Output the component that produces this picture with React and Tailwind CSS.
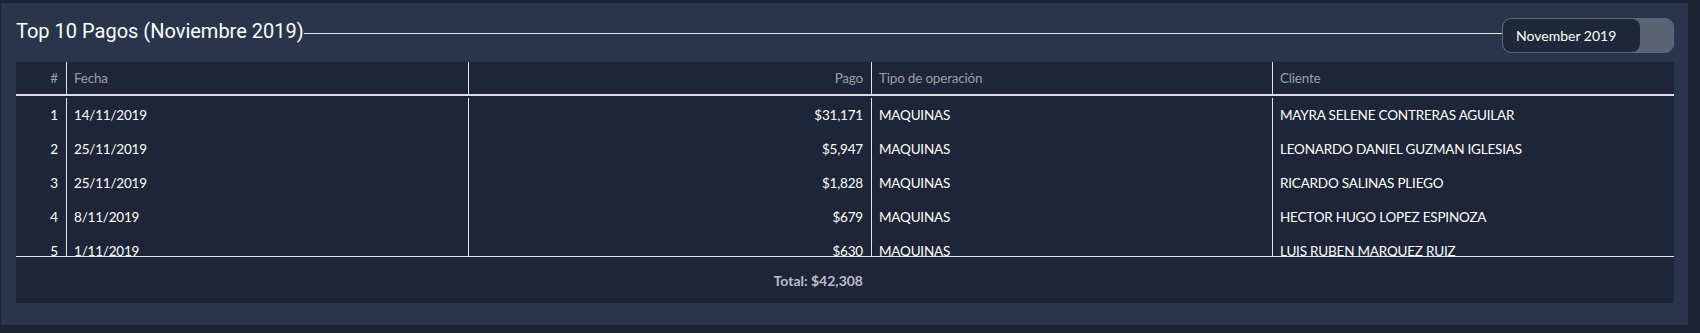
import React from "react";

const rows = [
  ["1", "14/11/2019", "$31,171", "MAQUINAS", "MAYRA SELENE CONTRERAS AGUILAR"],
  ["2", "25/11/2019", "$5,947", "MAQUINAS", "LEONARDO DANIEL GUZMAN IGLESIAS"],
  ["3", "25/11/2019", "$1,828", "MAQUINAS", "RICARDO SALINAS PLIEGO"],
  ["4", "8/11/2019", "$679", "MAQUINAS", "HECTOR HUGO LOPEZ ESPINOZA"],
  ["5", "1/11/2019", "$630", "MAQUINAS", "LUIS RUBEN MARQUEZ RUIZ"],
];

const grid = "grid grid-cols-[50px_402px_403px_401px_402px]";

export default function App() {
  return (
    <div className="w-[1700px] h-[333px] bg-[#1d2335] pt-[3px] pl-[1px] overflow-hidden">
      <div className="w-[1687px] h-[322px] bg-[#28354b] pl-[15px] pr-[14px] pt-[15px]">
        {/* Title row */}
        <div className="flex items-start h-[35px]">
          <div className="mt-[1px] text-[20px] leading-[24px] text-white whitespace-nowrap font-['Roboto',sans-serif]">
            Top 10 Pagos (Noviembre 2019)
          </div>
          <div className="flex-1 h-px bg-[#e6e8ec] mt-[15px]" />
          <div className="w-[172px] h-[35px] rounded-[9px] border border-[#5b6578] bg-[#5a6475] overflow-hidden flex">
            <div className="w-[137px] h-full bg-[#1f283b] rounded-[8px] flex items-center pl-[13px] text-[14px] text-white font-['Lato',sans-serif]">
              November 2019
            </div>
          </div>
        </div>
        {/* Table */}
        <div className="mt-[9px] bg-[#1e2538] font-['Lato',sans-serif] text-[13.5px] tracking-[-0.2px]">
          <div className={`${grid} h-[34px] border-b-2 border-[#dcdde0] text-[#9a9ea8]`}>
            <div className="flex items-center justify-end pr-[8px]">#</div>
            <div className="flex items-center pl-[7px] border-l border-[#e2e3e6]">Fecha</div>
            <div className="flex items-center justify-end pr-[8px] border-l border-[#e2e3e6]">Pago</div>
            <div className="flex items-center pl-[7px] border-l border-[#e2e3e6]">Tipo de operación</div>
            <div className="flex items-center pl-[7px] border-l border-[#e2e3e6]">Cliente</div>
          </div>
          <div className="h-[161px] pt-[2px] overflow-hidden border-b border-[#e2e3e6]">
            {rows.map((r) => (
              <div key={r[0]} className={`${grid} h-[34px] text-white`}>
                <div className="flex items-center justify-end pr-[8px]">{r[0]}</div>
                <div className="flex items-center pl-[7px] border-l border-[#e2e3e6]">{r[1]}</div>
                <div className="flex items-center justify-end pr-[8px] border-l border-[#e2e3e6]">{r[2]}</div>
                <div className="flex items-center pl-[7px] border-l border-[#e2e3e6]">{r[3]}</div>
                <div className="flex items-center pl-[7px] border-l border-[#e2e3e6]">{r[4]}</div>
              </div>
            ))}
          </div>
          <div className={`${grid} h-[46px]`}>
            <div />
            <div />
            <div className="flex items-center justify-end pr-[8px] text-[14px] tracking-normal font-bold text-[#b9bdc6]">Total: $42,308</div>
            <div />
            <div />
          </div>
        </div>
      </div>
    </div>
  );
}
